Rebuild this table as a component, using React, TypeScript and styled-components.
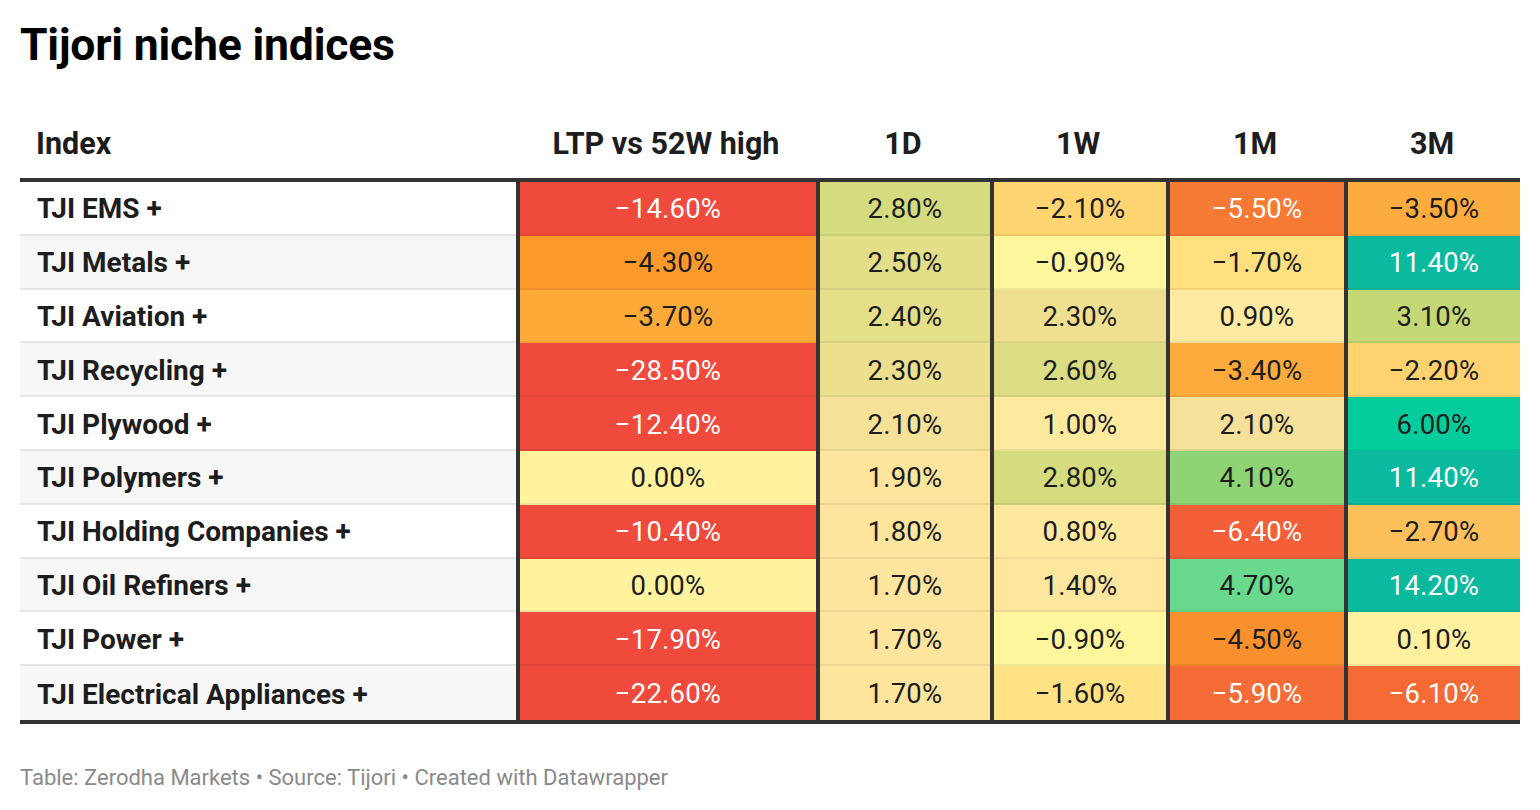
import React from "react";
import styled, { createGlobalStyle } from "styled-components";

const Global = createGlobalStyle`
  html, body { margin: 0; padding: 0; background: #ffffff; }
  body { font-family: Roboto, "Liberation Sans", sans-serif; color: #1d1d1d; }
`;

const Page = styled.div`
  width: 1540px;
  height: 810px;
  box-sizing: border-box;
  padding: 20px 20px 0 20px;
  display: flex;
  flex-direction: column;
`;

const Title = styled.h1`
  margin: 0;
  font-family: Roboto, sans-serif;
  font-weight: 700;
  font-size: 44.5px;
  line-height: 50px;
  color: #000;
  letter-spacing: -0.2px;
`;

const COLS = "496px 300px 174px 176px 178px 176px";

const HeaderRow = styled.div`
  margin-top: 50px;
  display: grid;
  grid-template-columns: ${COLS};
  height: 58px;
  box-sizing: border-box;
  padding-bottom: 12px;
  align-items: center;
`;

const HeadCell = styled.div<{ $left?: boolean }>`
  font-weight: 700;
  font-size: 30.5px;
  color: #1d1d1d;
  text-align: ${(p) => (p.$left ? "left" : "center")};
  padding-left: ${(p) => (p.$left ? "16px" : "0")};
`;

const Body = styled.div`
  border-top: 4px solid #333;
  border-bottom: 4px solid #333;
`;

const Row = styled.div`
  display: grid;
  grid-template-columns: ${COLS};
  height: 53.8px;
`;

const LabelCell = styled.div<{ $zebra: boolean; $last: boolean }>`
  box-sizing: border-box;
  display: flex;
  align-items: center;
  padding-left: 17px;
  padding-top: 2px;
  font-weight: 700;
  font-size: 28px;
  color: #1d1d1d;
  background: ${(p) => (p.$zebra ? "#f7f7f7" : "#ffffff")};
  border-bottom: ${(p) => (p.$last ? "none" : "2px solid #e6e6e6")};
`;

const ValueCell = styled.div<{ $bg: string; $light: boolean; $last: boolean }>`
  box-sizing: border-box;
  display: flex;
  align-items: center;
  justify-content: center;
  border-left: 4px solid #333;
  background: ${(p) => p.$bg};
  color: ${(p) => (p.$light ? "#ffffff" : "#1d1d1d")};
  font-size: 27.5px;
  font-weight: 400;
  letter-spacing: 0.2px;
  box-shadow: ${(p) => (p.$last ? "none" : "inset 0 -2px 0 rgba(0,0,0,0.06)")};
`;

const Footer = styled.div`
  margin-top: 41px;
  font-size: 22px;
  color: #8a8a8a;
`;

type Cell = [string, string, boolean?];

const data: { name: string; cells: Cell[] }[] = [
  { name: "TJI EMS +", cells: [["−14.60%", "#ef4a3c", true], ["2.80%", "#d4dc7f"], ["−2.10%", "#fed571"], ["−5.50%", "#f67934", true], ["−3.50%", "#fdac3f"]] },
  { name: "TJI Metals +", cells: [["−4.30%", "#fb9a2a"], ["2.50%", "#e3df88"], ["−0.90%", "#fff69e"], ["−1.70%", "#fee07f"], ["11.40%", "#0bba9e", true]] },
  { name: "TJI Aviation +", cells: [["−3.70%", "#fdaa39"], ["2.40%", "#e6df8a"], ["2.30%", "#eee090"], ["0.90%", "#feeaa0"], ["3.10%", "#c4d876"]] },
  { name: "TJI Recycling +", cells: [["−28.50%", "#ef4a3c", true], ["2.30%", "#ece08e"], ["2.60%", "#dadd83"], ["−3.40%", "#fdab3c"], ["−2.20%", "#fed26f"]] },
  { name: "TJI Plywood +", cells: [["−12.40%", "#ef4a3c", true], ["2.10%", "#f5e298"], ["1.00%", "#feea9f"], ["2.10%", "#f5e199"], ["6.00%", "#04cd9d"]] },
  { name: "TJI Polymers +", cells: [["0.00%", "#fff3a0"], ["1.90%", "#fde59d"], ["2.80%", "#d4dc7e"], ["4.10%", "#8ed374"], ["11.40%", "#0bba9e", true]] },
  { name: "TJI Holding Companies +", cells: [["−10.40%", "#ef4a3c", true], ["1.80%", "#fde59d"], ["0.80%", "#fee99f"], ["−6.40%", "#f35f39", true], ["−2.70%", "#fdc05a"]] },
  { name: "TJI Oil Refiners +", cells: [["0.00%", "#fff3a0"], ["1.70%", "#fde59d"], ["1.40%", "#fde69e"], ["4.70%", "#68d98d"], ["14.20%", "#0bb99e", true]] },
  { name: "TJI Power +", cells: [["−17.90%", "#ef4a3c", true], ["1.70%", "#fde59d"], ["−0.90%", "#fff69e"], ["−4.50%", "#fa8f2d"], ["0.10%", "#fff19f"]] },
  { name: "TJI Electrical Appliances +", cells: [["−22.60%", "#ef4a3c", true], ["1.70%", "#fde59d"], ["−1.60%", "#ffe283"], ["−5.90%", "#f56c36", true], ["−6.10%", "#f56935", true]] },
];

const headers = ["LTP vs 52W high", "1D", "1W", "1M", "3M"];

export default function App() {
  return (
    <>
      <Global />
      <Page>
        <Title>Tijori niche indices</Title>
        <HeaderRow>
          <HeadCell $left>Index</HeadCell>
          {headers.map((h) => (
            <HeadCell key={h}>{h}</HeadCell>
          ))}
        </HeaderRow>
        <Body>
          {data.map((r, i) => {
            const last = i === data.length - 1;
            return (
              <Row key={r.name}>
                <LabelCell $zebra={i % 2 === 1} $last={last}>{r.name}</LabelCell>
                {r.cells.map(([v, bg, light], j) => (
                  <ValueCell key={j} $bg={bg} $light={!!light} $last={last}>
                    {v}
                  </ValueCell>
                ))}
              </Row>
            );
          })}
        </Body>
        <Footer>Table: Zerodha Markets • Source: Tijori • Created with Datawrapper</Footer>
      </Page>
    </>
  );
}
